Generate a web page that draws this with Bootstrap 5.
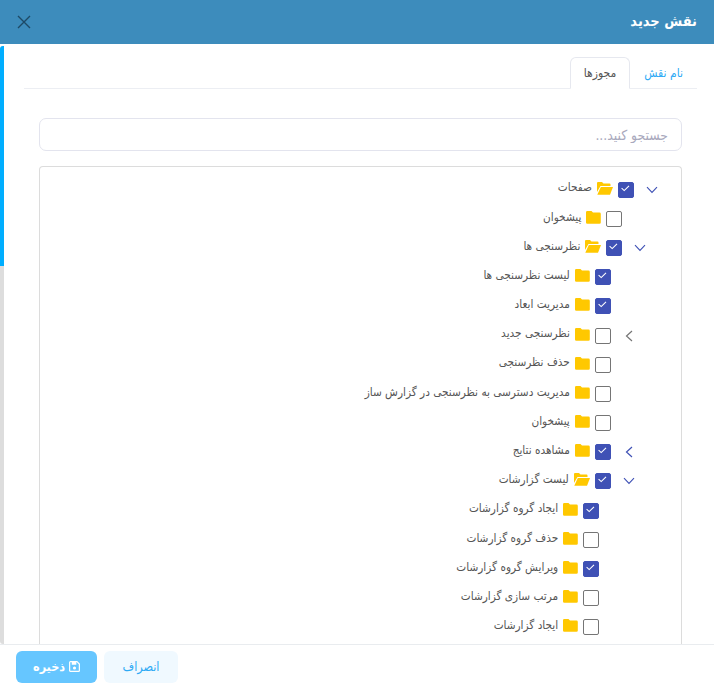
<!DOCTYPE html>
<html lang="fa" dir="rtl">
<head>
<meta charset="utf-8">
<title>نقش جدید</title>
<link href="https://cdn.jsdelivr.net/npm/bootstrap@5.3.0/dist/css/bootstrap.min.css" rel="stylesheet">
<style>
html,body{height:100%;overflow:hidden;background:#fff}
body{font-family:"DejaVu Sans Condensed","DejaVu Sans",sans-serif;font-size:12px;color:#555}
.shell{height:685px}
.head{height:44px;background:#3d8cbc;padding:0 17px;flex:none}
.head-title{font-size:14.5px;font-weight:700;color:#fff;margin:0;font-family:inherit}
.closer{background:none;border:0;padding:0;line-height:0}
.main{min-height:0;padding-top:2px}
.rail{width:4px;background:#ddd;border-radius:3px 0 0 3px;overflow:hidden;flex:none}
.rail-thumb{height:220px;background:#00aeff}
.pane{min-width:0;overflow:hidden;padding:11px 17px 0 20px}
.tabbar{border-bottom:1px solid #eceef3;height:32px;flex:none;padding-right:0}
.tabbar .nav-link{font-size:12px;height:32px;padding:6px 13px 0;color:#2eaaf5;border-radius:6px 6px 0 0;background:none}
.tabbar .nav-link.active{color:#555;border-color:#e6e8ef #e6e8ef #fff;background:#fff}
.searchbox{width:auto;flex:none;margin:29px 15px 15px 15px;height:33px;border:1px solid #e3e4ee;border-radius:7px;font-size:13.800px;padding:0 13px;box-shadow:none;font-family:inherit}
.searchbox::placeholder{color:#a9a9bd}
.treebox{margin:0 15px;border:1px solid #dcdcdc;border-bottom:0;border-radius:4px 4px 0 0;padding:8px 0 0;flex:1}
.node{height:29.2px;display:flex;align-items:center}
.l0{padding-right:19px}.l1{padding-right:30.6px}.l2{padding-right:42.2px}.l3{padding-right:53.8px}
.arrow{width:20px;margin-left:8px;flex:none;display:flex;justify-content:center;line-height:0}
.node .form-check-input{width:16px;height:16px;margin:0;flex:none;border:1.5px solid #757575;border-radius:2px;background-color:#fff;float:none}
.node .form-check-input:checked{background-color:#3f51b5;border-color:#3f51b5;background-size:16px 16px;background-position:center;background-image:url("data:image/svg+xml,%3csvg xmlns='http://www.w3.org/2000/svg' viewBox='0 0 16 16'%3e%3cpath fill='none' stroke='%23fff' stroke-width='1.1' d='M3.6 6.2 6.2 8.6 11 3.8'/%3e%3c/svg%3e")}
.folder{margin-right:5px;margin-top:-3px;flex:none;line-height:0}
.nodetext{margin-right:5px;margin-top:-3px;white-space:nowrap;color:#555;font-size:11.700px}
.foot{height:41px;border-top:1px solid #e9ecef;padding:6px 16px 0;gap:7px;flex:none}
.btn-off,.btn-save{height:32px;border:0;border-radius:6px;font-size:12.500px;padding:0;font-family:inherit}
.btn-off{width:74px;background:#f0f9ff;color:#2eaaf5}
.btn-save{width:81px;background:#66c6ff;color:#fff;font-weight:700}
</style>
</head>
<body>
<div class="shell d-flex flex-column">
  <header class="head d-flex align-items-center justify-content-between">
    <h5 class="head-title">نقش جدید</h5>
    <button class="closer" type="button" aria-label="بستن">
      <svg width="14" height="14" viewBox="0 0 14 14"><path d="M1 1 13 13M13 1 1 13" stroke="#1d4a66" stroke-width="1.4" fill="none"/></svg>
    </button>
  </header>
  <div class="main d-flex flex-grow-1">
    <div class="pane d-flex flex-column flex-grow-1">
      <ul class="nav nav-tabs tabbar">
        <li class="nav-item"><a class="nav-link" href="#">نام نقش</a></li>
        <li class="nav-item"><a class="nav-link active" href="#">مجوزها</a></li>
      </ul>
      <input class="form-control searchbox" type="text" placeholder="جستجو کنید...">
      <div class="treebox" id="tree"></div>
    </div>
    <div class="rail"><div class="rail-thumb"></div></div>
  </div>
  <footer class="foot d-flex justify-content-end">
    <button class="btn btn-off" type="button">انصراف</button>
    <button class="btn btn-save" type="button"><svg width="11" height="11" viewBox="0 0 12 12" style="vertical-align:-1px"><path fill="none" stroke="#fff" stroke-width="1.300" d="M1.500.7H8.700L11.300 3.300V10.500A.8.8 0 0 1 10.500 11.300H1.500A.8.8 0 0 1 .7 10.500V1.500A.8.8 0 0 1 1.500.7Z"/><path fill="#fff" d="M3 1h5v3H3ZM6 6a1.700 1.700 0 1 0 0 3.400A1.700 1.700 0 0 0 6 6Z"/></svg> ذخیره</button>
  </footer>
</div>
<script>
var chevDown='<svg width="12" height="8" viewBox="0 0 12 8"><path d="M1 1.200 6 6.500 11 1.200" fill="none" stroke="#3f51b5" stroke-width="1.100"/></svg>';
function chevLeft(c){return '<svg width="8" height="12" viewBox="0 0 8 12"><path d="M7 1 1.500 6 7 11" fill="none" stroke="'+c+'" stroke-width="1.200"/></svg>';}
var folderShut='<svg width="15" height="13" viewBox="0 0 15 13"><path fill="#ffc800" d="M1.300 0H5.500L7 1.600H13.500A1.300 1.300 0 0 1 14.800 2.900V11.500A1.300 1.300 0 0 1 13.500 12.800H1.300A1.300 1.300 0 0 1 0 11.500V1.300A1.300 1.300 0 0 1 1.300 0Z"/></svg>';
var folderOpen='<svg width="16" height="13" viewBox="0 0 16 13"><path fill="#ffc800" d="M1 0H5L6.500 1.500H12.500A1 1 0 0 1 13.500 2.500V4H3.500L0 10V1A1 1 0 0 1 1 0Z"/><path fill="#ffc800" d="M3.800 5H16L13 12.800H0.300Z"/></svg>';
var rows=[
[0,'d',1,1,'صفحات'],[1,'',0,0,'پیشخوان'],[1,'d',1,1,'نظرسنجی ها'],[2,'',1,0,'لیست نظرسنجی ها'],[2,'',1,0,'مدیریت ابعاد'],
[2,'g',0,0,'نظرسنجی جدید'],[2,'',0,0,'حذف نظرسنجی'],[2,'',0,0,'مدیریت دسترسی به نظرسنجی در گزارش ساز'],[2,'',0,0,'پیشخوان'],
[2,'b',1,0,'مشاهده نتایج'],[2,'d',1,1,'لیست گزارشات'],[3,'',1,0,'ایجاد گروه گزارشات'],[3,'',0,0,'حذف گروه گزارشات'],
[3,'',1,0,'ویرایش گروه گزارشات'],[3,'',0,0,'مرتب سازی گزارشات'],[3,'',0,0,'ایجاد گزارشات']];
document.getElementById('tree').innerHTML=rows.map(function(r){
 var a=r[1]==='d'?chevDown:r[1]==='g'?chevLeft('#757575'):r[1]==='b'?chevLeft('#3f51b5'):'';
 return '<div class="node l'+r[0]+'"><span class="arrow">'+a+'</span><input class="form-check-input" type="checkbox"'+(r[2]?' checked':'')+'><span class="folder">'+(r[3]?folderOpen:folderShut)+'</span><span class="nodetext">'+r[4]+'</span></div>';
}).join('');
</script>
</body>
</html>
